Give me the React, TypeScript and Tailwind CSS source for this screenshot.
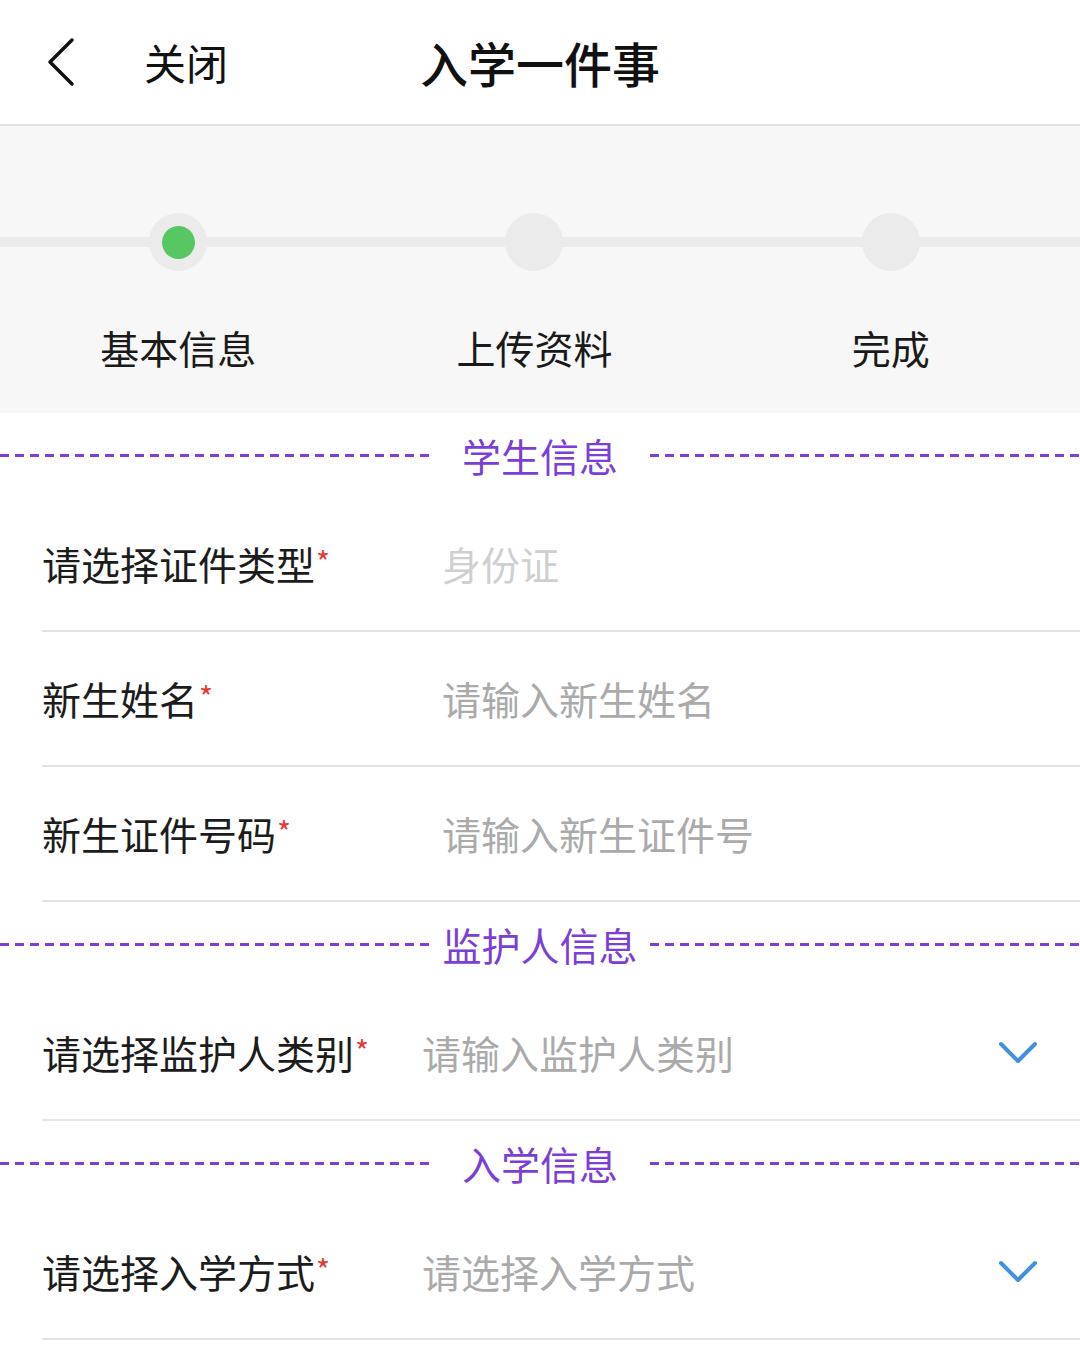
import React from "react";

const font = { fontFamily: '"Noto Sans CJK SC", "Noto Sans", sans-serif' };

const steps = [
  { label: "基本信息", active: true },
  { label: "上传资料", active: false },
  { label: "完成", active: false },
];

function Chevron() {
  return (
    <svg width="40" height="24" viewBox="0 0 40 24" fill="none">
      <path d="M3 3 L20 20 L37 3" stroke="#4190db" strokeWidth="4" strokeLinecap="round" strokeLinejoin="round" />
    </svg>
  );
}

function Dashes() {
  return <div className="h-[3px] bg-[repeating-linear-gradient(90deg,#7c3fdc_0_9px,transparent_9px_15px)]" />;
}

function SectionTitle({ title }: { title: string }) {
  return (
    <div className="grid grid-cols-[430px_1fr_430px] items-center h-[84px]">
      <Dashes />
      <div className="text-center text-[39px] leading-none text-[#7b3fd8]">{title}</div>
      <Dashes />
    </div>
  );
}

function Row({
  label,
  value,
  light,
  select,
}: {
  label: string;
  value: string;
  light?: boolean;
  select?: boolean;
}) {
  return (
    <div className="ml-[42px] h-[135px] border-b-2 border-[#e3e3e3] flex items-center">
      <div className={`${select ? "w-[380px]" : "w-[400px]"} flex items-start text-[39px] leading-none text-[#1c1c1c]`}>
        {label}
        <span className="text-[30px] text-[#e53935] ml-[1px] mt-[2px]">*</span>
      </div>
      <div className={`flex-1 text-[39px] leading-none ${light ? "text-[#cfcfcf]" : "text-[#aaaaaa]"}`}>{value}</div>
      {select && (
        <div className="mr-[42px]">
          <Chevron />
        </div>
      )}
    </div>
  );
}

export default function App() {
  return (
    <div className="w-[1080px] h-[1369px] bg-white overflow-hidden" style={font}>
      {/* header */}
      <header className="relative h-[126px] border-b-2 border-[#e2e2e2] flex items-center">
        <div className="ml-[46px] w-[32px]">
          <svg width="30" height="50" viewBox="0 0 30 50" fill="none">
            <path d="M26 3 L4 25 L26 47" stroke="#111" strokeWidth="3.5" strokeLinecap="round" strokeLinejoin="round" />
          </svg>
        </div>
        <span className="ml-[66px] text-[42px] leading-none text-[#111]">关闭</span>
        <h1 className="absolute left-1/2 -translate-x-1/2 text-[48px] leading-none font-medium text-[#111]">入学一件事</h1>
      </header>

      {/* steps */}
      <section className="bg-[#f7f7f7] h-[287px] pt-[86px]">
        <div className="relative h-[60px] flex items-center">
          <div className="absolute inset-x-0 top-[25px] h-[10px] bg-[#ebebeb]" />
          <div className="relative grid grid-cols-3 w-[1069px]">
            {steps.map((s) => (
              <div key={s.label} className="flex justify-center">
                <div className="w-[58px] h-[58px] rounded-full bg-[#ebebeb] flex items-center justify-center">
                  {s.active && <div className="w-[33px] h-[33px] rounded-full bg-[#58c762]" />}
                </div>
              </div>
            ))}
          </div>
        </div>
        <div className="grid grid-cols-3 w-[1069px] mt-[56px]">
          {steps.map((s) => (
            <div key={s.label} className="text-center text-[39px] leading-none text-[#1a1a1a]">
              {s.label}
            </div>
          ))}
        </div>
      </section>

      <SectionTitle title="学生信息" />
      <Row label="请选择证件类型" value="身份证" light />
      <Row label="新生姓名" value="请输入新生姓名" />
      <Row label="新生证件号码" value="请输入新生证件号" />

      <SectionTitle title="监护人信息" />
      <Row label="请选择监护人类别" value="请输入监护人类别" select />

      <SectionTitle title="入学信息" />
      <Row label="请选择入学方式" value="请选择入学方式" select />
    </div>
  );
}
